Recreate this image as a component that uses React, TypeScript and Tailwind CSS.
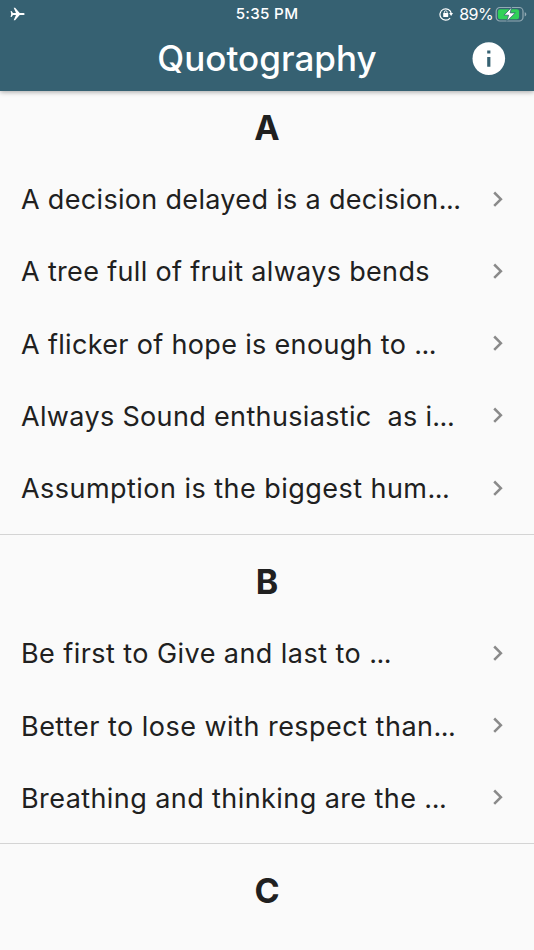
import { Fragment } from "react";

type Quote = { text: string; truncated?: boolean; tracking: string };
type Section = { letter: string; quotes: Quote[] };

const SECTIONS: Section[] = [
  {
    letter: "A",
    quotes: [
      { text: "A decision delayed is a decision", truncated: true, tracking: "tracking-[0.32px]" },
      { text: "A tree full of fruit always bends", tracking: "tracking-[0.33px]" },
      { text: "A flicker of hope is enough to ", truncated: true, tracking: "tracking-[0.33px]" },
      { text: "Always Sound enthusiastic  as i", truncated: true, tracking: "tracking-[0.34px]" },
      { text: "Assumption is the biggest hum", truncated: true, tracking: "tracking-[0.46px]" },
    ],
  },
  {
    letter: "B",
    quotes: [
      { text: "Be first to Give and last to ", truncated: true, tracking: "tracking-[0.44px]" },
      { text: "Better to lose with respect than", truncated: true, tracking: "tracking-[0.48px]" },
      { text: "Breathing and thinking are the ", truncated: true, tracking: "tracking-[0.42px]" },
    ],
  },
  { letter: "C", quotes: [] },
];

function StatusBar() {
  return (
    <div className="grid h-7 grid-cols-3 items-center">
      <svg viewBox="0 0 15 14" className="ml-[10px] h-[14px] w-[15px]" fill="currentColor">
        <path d="M14.7 7c0-.7-.8-1.1-1.8-1.1H9.7L5.1.7H3.7l2.3 5.2H3L1.5 4H.6l.6 3-.6 3h.9L3 8.1h3l-2.3 5.2h1.4l4.6-5.2h3.2c1 0 1.8-.4 1.8-1.1z" />
      </svg>
      <span className="text-center text-[15.2px] font-medium leading-7 tracking-[0.3px]">
        5:35 PM
      </span>
      <div className="flex items-center justify-end pr-[7px]">
        <svg viewBox="0 0 14 14" className="mr-[6px] h-[14px] w-[14px]" fill="none">
          <path d="M11.1 11.1A5.7 5.7 0 1 1 12.3 6.6" stroke="currentColor" strokeWidth="1.2" />
          <path d="M10.1 6.1H14l-1.9 2.9z" fill="currentColor" />
          <rect x="4.2" y="6.1" width="5" height="4" rx=".5" fill="currentColor" />
          <path d="M5.3 6.4V5.2a1.4 1.4 0 0 1 2.8 0v1.2" stroke="currentColor" strokeWidth=".9" />
        </svg>
        <span className="mr-[2px] text-[16px] leading-7 tracking-[-0.6px]">89%</span>
        <svg viewBox="0 0 32 16" className="h-4 w-8" fill="none">
          <rect x="1.2" y="1.5" width="26.8" height="13.5" rx="3.7" stroke="#93aab4" strokeWidth="1.2" />
          <path d="M29.7 6.2v4.2c1.1-.4 1.6-1.1 1.6-2.1s-.5-1.7-1.6-2.1z" fill="#93aab4" />
          <rect x="2.9" y="3.2" width="21.2" height="10.1" rx="2.2" fill="#30d158" />
          <path
            d="M16.6 1.2 9 9.2h4.6l-1.9 6.2 8.6-8.5h-5.1z"
            fill="white"
            stroke="#366172"
            strokeWidth=".8"
          />
        </svg>
      </div>
    </div>
  );
}

function AppBar() {
  return (
    <header className="relative z-10 h-[90.5px] bg-[#366172] text-white shadow-[0_1px_5px_rgba(0,0,0,0.35)]">
      <StatusBar />
      <div className="grid h-[61px] grid-cols-[80px_1fr_80px] items-center">
        <h1 className="col-start-2 text-center text-[35px] font-medium leading-[61px] tracking-[0.05px]">
          Quotography
        </h1>
        <button className="ml-[18px] h-[34px] w-[34px]" aria-label="About">
          <svg viewBox="0 0 34 34" className="h-[34px] w-[34px]">
            <circle cx="16.8" cy="16.6" r="16.3" fill="white" />
            <path d="M15.2 8.4h3.2v3.2h-3.2zM15.2 15h3.2v9.8h-3.2z" fill="#366172" />
          </svg>
        </button>
      </div>
    </header>
  );
}

function QuoteRow({ quote }: { quote: Quote }) {
  return (
    <li className="flex h-[72.2px] items-center justify-between pl-[21px] pr-[31px]">
      <span className={`whitespace-pre pt-px text-[27px] leading-9 ${quote.tracking}`}>
        {quote.text}
        {quote.truncated && <span className="tracking-[-0.5px]">...</span>}
      </span>
      <svg viewBox="0 0 10 18" className="h-[18px] w-[10px] shrink-0" fill="none">
        <path d="m1.2 1.5 6.7 6.7-6.7 6.7" stroke="#8a8a8a" strokeWidth="2.5" />
      </svg>
    </li>
  );
}

export default function App() {
  return (
    <div className="h-[950px] overflow-hidden bg-[#fafafa] font-['Inter',sans-serif] text-[#202020]">
      <AppBar />
      <main className="pt-[1px]">
        {SECTIONS.map((section, i) => (
          <Fragment key={section.letter}>
            {i > 0 && <hr className="mb-[11px] mt-[9px] h-px border-0 bg-[#d4d4d4]" />}
            <section>
              <h2 className="h-[72.2px] text-center text-[34px] font-bold leading-[71.6px]">
                {section.letter}
              </h2>
              <ul>
                {section.quotes.map((quote) => (
                  <QuoteRow key={quote.text} quote={quote} />
                ))}
              </ul>
            </section>
          </Fragment>
        ))}
      </main>
    </div>
  );
}
